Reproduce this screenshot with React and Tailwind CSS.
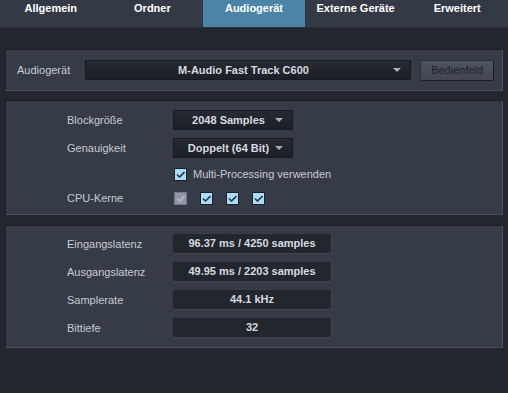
import React from 'react';

const tabs = ['Allgemein', 'Ordner', 'Audiogerät', 'Externe Geräte', 'Erweitert'];

const Arrow = () => (
  <svg width="8" height="4" viewBox="0 0 8 4" className="shrink-0">
    <path d="M0 0 H8 L4 4 Z" fill="#a9b0ba" />
  </svg>
);

const Check = ({ disabled }) => (
  <div
    className={`w-[13px] h-[13px] flex items-center justify-center border ${
      disabled ? 'bg-[#8f99a6] border-[#6f7884]' : 'bg-[#a9dcf6] border-[#1b2028]'
    }`}
  >
    <svg width="9" height="7" viewBox="0 0 9 7">
      <path
        d="M1 3.5 L3.5 6 L8.5 1"
        stroke={disabled ? '#b4bcc6' : '#2a3440'}
        strokeWidth="1.6"
        fill="none"
      />
    </svg>
  </div>
);

const Select = ({ value, className = '' }) => (
  <div
    className={`h-[20px] flex items-center pl-2 pr-[9px] bg-gradient-to-b from-[#262a31] to-[#1c1f25] border border-[#16191e] ${className}`}
  >
    <span className="flex-1 text-center font-bold text-[11px] text-[#d6dae0]">{value}</span>
    <Arrow />
  </div>
);

const Field = ({ value }) => (
  <div className="w-[159px] h-[20px] flex items-center justify-center bg-[#22262d] border-b border-r border-[#3f4652] font-bold text-[11px] text-[#d6dae0]">
    {value}
  </div>
);

const Row = ({ label, children }) => (
  <div className="flex items-center h-[20px]">
    <div className="w-[106px] text-[11px] text-[#c6cbd2]">{label}</div>
    {children}
  </div>
);

export default function App() {
  return (
    <div
      className="w-[508px] h-[393px] bg-[#22262e] flex flex-col overflow-hidden"
      style={{ fontFamily: '"Liberation Sans", Arial, sans-serif' }}
    >
      {/* Tabs */}
      <div className="flex h-[28px] bg-[#343a45] border-b border-[#2b3039]">
        {tabs.map((t) => (
          <div
            key={t}
            className={`flex-1 flex items-center justify-center pb-[10px] font-bold text-[11px] text-white ${
              t === 'Audiogerät' ? 'bg-[#4b84a7]' : ''
            }`}
          >
            {t}
          </div>
        ))}
      </div>

      <div className="px-[5px] pt-[21px] flex flex-col gap-[9px]">
        {/* Device */}
        <div className="h-[42px] bg-[#363c47] border border-[#4a515d] border-t-[#1a1d22] border-l-[#1a1d22] flex items-center pl-[11px] pr-[8px]">
          <div className="w-[68px] text-[11px] text-[#c6cbd2]">Audiogerät</div>
          <Select value="M-Audio Fast Track C600" className="w-[328px]" />
          <button className="ml-[9px] w-[74px] h-[21px] rounded-[2px] bg-gradient-to-b from-[#4d5461] to-[#404652] border border-[#2a2f37] border-b-[#1a1d22] border-r-[#1a1d22] text-[11px] text-[#1c2027]">
            Bedienfeld
          </button>
        </div>

        {/* Block settings */}
        <div className="h-[115px] bg-[#363c47] border border-[#4a515d] border-t-[#1a1d22] border-l-[#1a1d22] pl-[61px] pt-[9px] flex flex-col gap-[8px]">
          <Row label="Blockgröße">
            <Select value="2048 Samples" className="w-[120px]" />
          </Row>
          <Row label="Genauigkeit">
            <Select value="Doppelt (64 Bit)" className="w-[120px]" />
          </Row>
          <div className="flex items-center h-[13px] mt-[2px] pl-[107px] gap-[6px]">
            <Check />
            <span className="text-[11px] text-[#c6cbd2]">Multi-Processing verwenden</span>
          </div>
          <div className="flex items-center h-[13px] mt-[3px]">
            <div className="w-[107px] text-[11px] text-[#c6cbd2]">CPU-Kerne</div>
            <div className="flex gap-[13px]">
              <Check disabled />
              <Check />
              <Check />
              <Check />
            </div>
          </div>
        </div>

        {/* Latency */}
        <div className="h-[123px] mt-[1px] bg-[#363c47] border border-[#4a515d] border-t-[#1a1d22] border-l-[#1a1d22] pl-[61px] pt-[8px] flex flex-col gap-[8px]">
          <Row label="Eingangslatenz">
            <Field value="96.37 ms / 4250 samples" />
          </Row>
          <Row label="Ausgangslatenz">
            <Field value="49.95 ms / 2203 samples" />
          </Row>
          <Row label="Samplerate">
            <Field value="44.1 kHz" />
          </Row>
          <Row label="Bittiefe">
            <Field value="32" />
          </Row>
        </div>
      </div>
    </div>
  );
}
